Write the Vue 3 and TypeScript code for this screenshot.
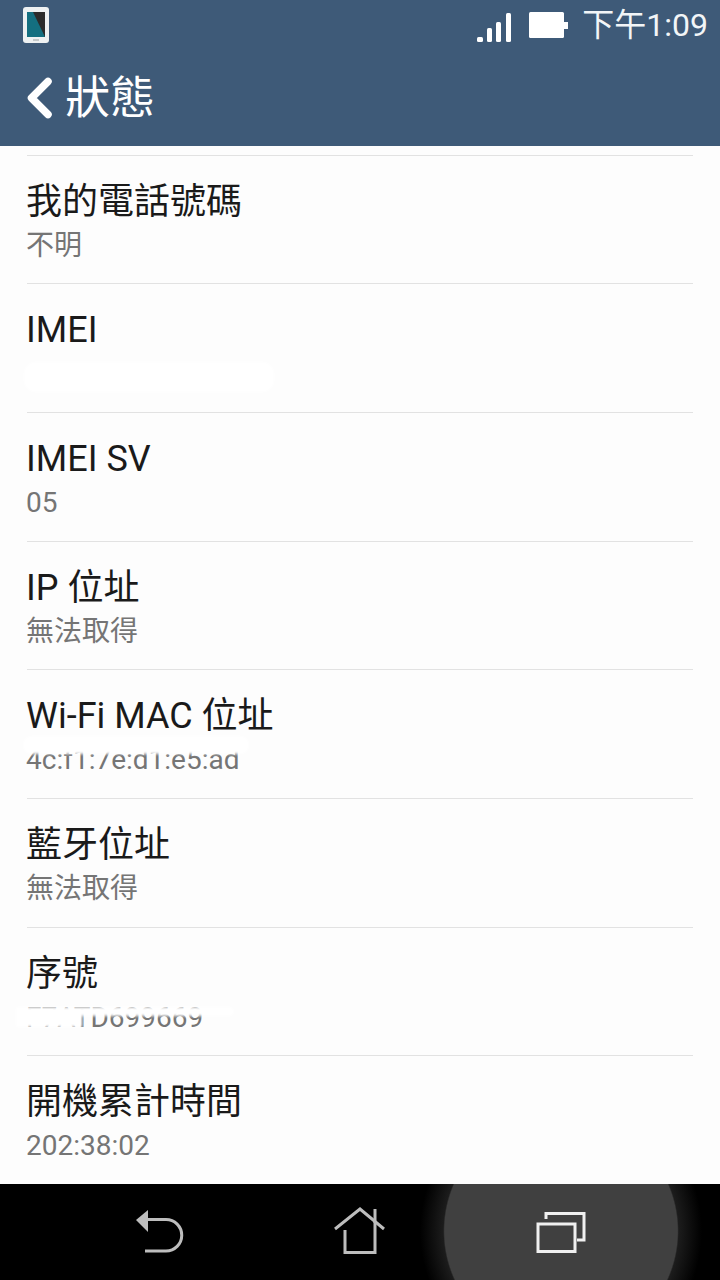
<template>
  <div class="phone">
    <header class="appbar">
      <div class="statusbar">
        <svg class="device-icon" width="26" height="36" viewBox="0 0 26 36">
          <rect x="0" y="0" width="26" height="36" rx="3" fill="#eef1f2" />
          <rect x="4" y="5" width="18" height="25" fill="#2b2b2b" />
          <polygon points="4,5 10,5 22,30 4,30" fill="#146f80" />
          <rect x="10" y="32" width="6" height="2" fill="#c4c8ca" />
        </svg>
        <div class="status-right">
          <svg class="signal" width="34" height="30" viewBox="0 0 34 30">
            <rect x="0" y="24" width="6" height="5" rx="1.5" />
            <rect x="10" y="15" width="5" height="14" rx="1.5" />
            <rect x="19" y="9" width="5" height="20" rx="1.5" />
            <rect x="29" y="0" width="5" height="29" rx="1.5" />
          </svg>
          <svg class="battery" width="40" height="26" viewBox="0 0 40 26">
            <rect x="0" y="0" width="35" height="26" rx="1.5" />
            <rect x="35" y="10" width="4" height="7" />
          </svg>
          <span class="clock">下午1:09</span>
        </div>
      </div>
      <div class="toolbar">
        <svg class="chevron" width="26" height="42" viewBox="0 0 26 42">
          <path d="M21 4.5 L4.5 21 L21 37.5" />
        </svg>
        <h1 class="title">狀態</h1>
      </div>
    </header>

    <main class="list">
      <div v-for="row in rows" :key="row.label" class="row">
        <div class="label">{{ row.label }}</div>
        <div class="value">
          {{ row.value }}
          <span v-if="row.mask" class="smudge" :class="row.mask"></span>
        </div>
      </div>
    </main>

    <nav class="navbar">
      <div class="glow"></div>
      <button class="nav-btn" type="button" aria-label="返回">
        <svg width="60" height="60" viewBox="0 0 60 60">
          <polygon points="6,18 18,8 18,30" fill="#bdbdbd" />
          <path d="M17 17.5 H36 A15.75 15.75 0 0 1 36 49 H15" class="nav-line" />
        </svg>
      </button>
      <button class="nav-btn" type="button" aria-label="主畫面">
        <svg width="60" height="60" viewBox="0 0 60 60">
          <path d="M5 27 L30 7 L54 27" class="nav-line" />
          <path d="M45 7 V21" class="nav-line" />
          <path d="M15 28 V50.5 H45 V20" class="nav-line" />
        </svg>
      </button>
      <button class="nav-btn" type="button" aria-label="最近">
        <svg width="60" height="60" viewBox="0 0 60 60">
          <rect x="8" y="22" width="37" height="27.5" class="nav-line recents" />
          <path d="M16 17 V11.5 H54 V38 H47" class="nav-line recents" />
        </svg>
      </button>
    </nav>
  </div>
</template>

<script setup lang="ts">
interface StatusRow {
  label: string
  value: string
  mask?: string
}

const rows: StatusRow[] = [
  { label: '我的電話號碼', value: '不明' },
  { label: 'IMEI', value: '\u00a0', mask: 'mask-imei' },
  { label: 'IMEI SV', value: '05' },
  { label: 'IP 位址', value: '無法取得' },
  { label: 'Wi-Fi MAC 位址', value: '4c:f1:7e:d1:e5:ad', mask: 'mask-wifi' },
  { label: '藍牙位址', value: '無法取得' },
  { label: '序號', value: 'F7ATD699669', mask: 'mask-serial' },
  { label: '開機累計時間', value: '202:38:02' }
]
</script>

<style>
html,
body {
  background: #000;
}
</style>

<style scoped>
.phone {
  width: 720px;
  height: 1280px;
  display: flex;
  flex-direction: column;
  overflow: hidden;
  background: #fdfdfd;
  font-family: Roboto, "Noto Sans CJK TC", sans-serif;
}

.appbar {
  height: 146px;
  flex: none;
  background: #3e5a78;
  color: #fff;
}

.statusbar {
  height: 50px;
  padding: 7px 12px 0 23px;
  box-sizing: border-box;
  display: flex;
  justify-content: space-between;
  align-items: flex-start;
}

.status-right {
  display: flex;
  align-items: flex-start;
}

.signal {
  margin-top: 6px;
  fill: #fff;
}

.battery {
  margin: 5px 0 0 18px;
  fill: #fff;
}

.clock {
  margin-left: 13px;
  font-size: 32px;
  line-height: 36px;
  font-weight: 400;
  color: #f2f5f7;
}

.toolbar {
  height: 96px;
  padding-left: 27px;
  display: flex;
  align-items: center;
}

.chevron {
  fill: none;
  stroke: #fff;
  stroke-width: 7.5;
  stroke-linecap: round;
  stroke-linejoin: round;
}

.title {
  margin: 2px 0 0 12px;
  font-size: 45px;
  line-height: 52px;
  font-weight: 400;
}

.list {
  flex: 1;
  padding: 8.6px 27px 0;
  display: flex;
  flex-direction: column;
}

.row {
  flex: 1;
  border-top: 1px solid #e2e2e2;
  padding-top: 23px;
  box-sizing: border-box;
}

.label {
  margin-left: -1px;
  font-size: 36px;
  line-height: 46px;
  color: #1a1a1a;
}

.value {
  position: relative;
  margin: 3px 0 0 -1px;
  font-size: 28px;
  line-height: 36px;
  color: #757575;
}

.smudge {
  position: absolute;
  background: #fff;
  filter: blur(1.5px);
  border-radius: 12px;
}

.mask-imei {
  left: -2px;
  top: 6px;
  width: 250px;
  height: 30px;
}

.mask-wifi {
  left: -3px;
  top: -6px;
  width: 226px;
  height: 18px;
}

.mask-serial {
  left: -10px;
  top: 7px;
  width: 218px;
  height: 9px;
}

.mask-serial::after {
  content: "";
  position: absolute;
  left: 0;
  top: 0;
  width: 66px;
  height: 20px;
  background: #fff;
}

.navbar {
  position: relative;
  height: 96px;
  flex: none;
  padding: 0 60px;
  display: flex;
  overflow: hidden;
  background: #000;
}

.glow {
  position: absolute;
  left: 420px;
  top: -94px;
  width: 282px;
  height: 282px;
  background: radial-gradient(circle closest-side, #404040 0, #404040 82.5%, #1c1c1c 83.5%, #000 100%);
}

.nav-btn {
  position: relative;
  flex: 1;
  padding: 0;
  border: 0;
  background: none;
  display: flex;
  align-items: center;
  justify-content: center;
}

.nav-line {
  fill: none;
  stroke: #bdbdbd;
  stroke-width: 3;
}

.recents {
  stroke: #f0f0f0;
  stroke-width: 3;
}
</style>
